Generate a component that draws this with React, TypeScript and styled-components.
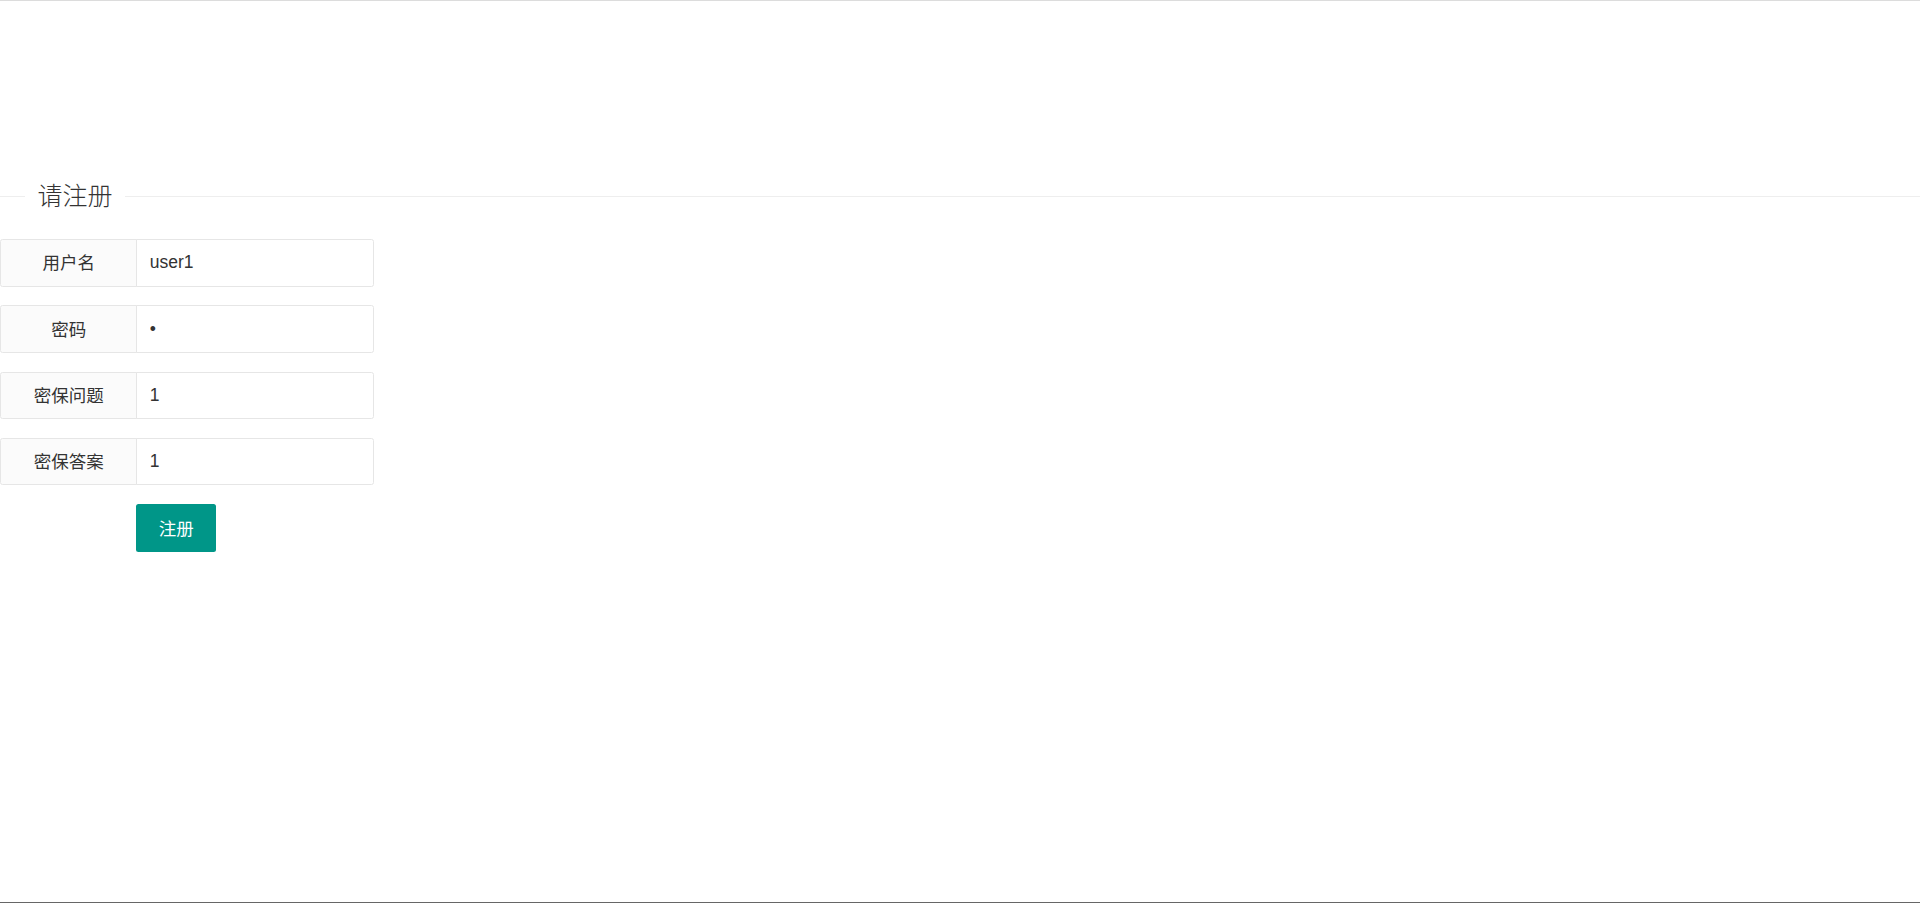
import React from 'react';
import styled, { createGlobalStyle } from 'styled-components';

const GlobalStyle = createGlobalStyle`
    html, body {
        margin: 0;
        padding: 0;
        background: #fff;
    }
    body {
        font-family: "Liberation Sans", "Noto Sans CJK SC", sans-serif;
        color: #333;
    }
    * {
        box-sizing: border-box;
    }
`

const Page = styled.div`
    height: 903px;
    border-top: 1px solid #dcdcdc;
    border-bottom: 1px solid #666;
    overflow: hidden;
`

const TitleField = styled.fieldset`
    margin: 180px 0 0;
    padding: 0;
    border: none;
    border-top: 1px solid #eee;
    min-width: 0;
`

const Legend = styled.legend`
    margin-left: 25px;
    padding: 0 12.5px;
    font-size: 25px;
    font-weight: 300;
    line-height: 30px;
    color: #333;
`

const Form = styled.form`
    margin-top: 28px;
`

const Row = styled.div`
    display: flex;
    height: 47.5px;
    margin-bottom: 18.75px;
`

const Label = styled.label`
    flex: 0 0 137.5px;
    display: flex;
    align-items: center;
    justify-content: center;
    padding-bottom: 2px;
    background: #fbfbfb;
    border: 1px solid #e6e6e6;
    border-radius: 2.5px 0 0 2.5px;
    font-size: 17.5px;
    color: #333;
`

const Input = styled.input`
    width: 238px;
    height: 100%;
    margin-left: -1.25px;
    padding: 0 12.5px;
    border: 1px solid #e6e6e6;
    border-radius: 0 2.5px 2.5px 0;
    background: #fff;
    font-family: "Liberation Sans", "Noto Sans CJK SC", sans-serif;
    font-size: 17.5px;
    color: #333;
    outline: none;
`

const Actions = styled.div`
    padding-left: 136.25px;
`

const Button = styled.button`
    height: 47.5px;
    padding: 0 22.5px;
    border: none;
    border-radius: 2.5px;
    background: #009688;
    color: #fff;
    font-family: "Liberation Sans", "Noto Sans CJK SC", sans-serif;
    font-size: 17.5px;
    cursor: pointer;
`

const fields = [
    { label: '用户名', type: 'text', value: 'user1' },
    { label: '密码', type: 'password', value: '1' },
    { label: '密保问题', type: 'text', value: '1' },
    { label: '密保答案', type: 'text', value: '1' },
]

function App() {
    return (
        <Page>
            <GlobalStyle />
            <TitleField>
                <Legend>请注册</Legend>
            </TitleField>
            <Form onSubmit={e => e.preventDefault()}>
                {fields.map(f => (
                    <Row key={f.label}>
                        <Label>{f.label}</Label>
                        <Input type={f.type} defaultValue={f.value} />
                    </Row>
                ))}
                <Actions>
                    <Button type="submit">注册</Button>
                </Actions>
            </Form>
        </Page>
    )
}

export default App;
